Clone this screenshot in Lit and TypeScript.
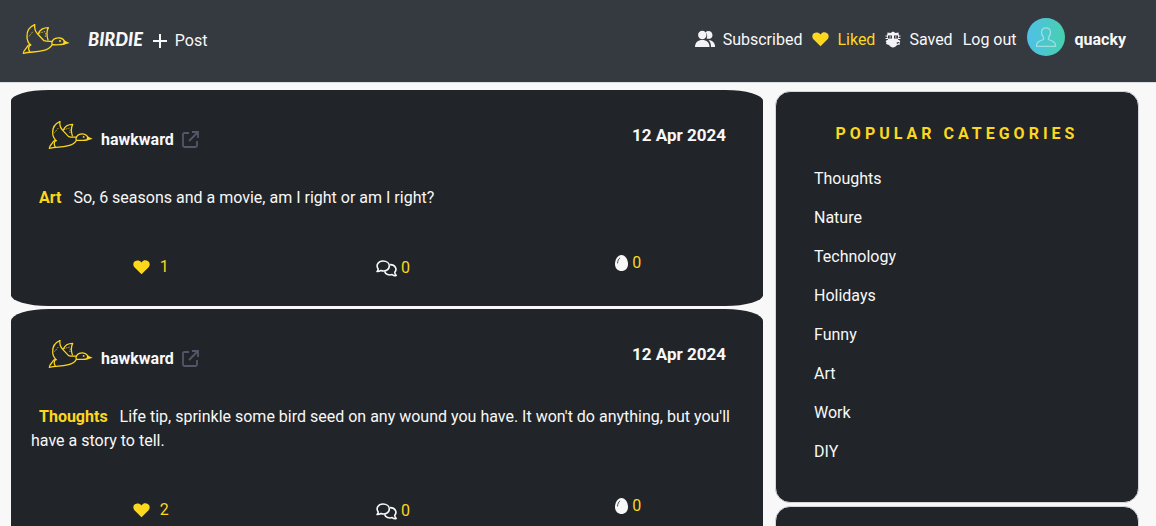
import { LitElement, html, css } from "lit";
import { customElement, property } from "lit/decorators.js";

const bird = html`<svg class="bird" viewBox="66 66 144 96" aria-hidden="true">
  <g fill="none" stroke="#fcd71d" stroke-width="4" stroke-linecap="round" stroke-linejoin="round">
    <path d="M104 71C90 77 80 90 81 107C81 117 85 126 92 132" />
    <path d="M104 71C103 81 107 93 113 99L132 119C140 122 149 121 157 121" />
    <path d="M115 98C119 88 129 80 145 80C140 90 139 101 144 117" />
    <path d="M157 121C160 113 171 109 181 111C189 112 193 119 196 124C193 130 186 131 178 131C170 132 160 131 157 131C155 128 155 124 157 121" />
    <path d="M157 131C151 141 139 147 128 149C109 154 91 152 70 157C69 150 77 145 82 137C83 133 86 131 92 132" />
    <path d="M90 132C84 139 86 147 89 152" />
    <path stroke-width="3" stroke-dasharray="1 6" d="M88 105L101 89M119 96L134 92M137 98L136 107" />
  </g>
  <path fill="#fcd71d" d="M191 118L209 126L189 132Z" />
  <circle fill="#fcd71d" cx="180" cy="120" r="3" />
</svg>`;

const heart = html`<svg class="heart" width="17" height="15" viewBox="0 0 18 16" aria-hidden="true">
  <path fill="#fcd71d" d="M9 15.200L1.700 8C-.4 5.900-.1 2.700 2 1.300C4.100-.1 7 .2 9 2.600C11-.2 13.900-.1 16 1.300C18.100 2.700 18.400 5.900 16.300 8Z" />
</svg>`;

const people = html`<svg width="20" height="18" viewBox="0 0 20 18" fill="#f4f4f8" aria-hidden="true">
  <path d="M10.500 2.300C13-.2 17.500 1.200 17.500 5.200C17.500 8.200 14 9.900 11.500 8.200C12.700 6.300 12.300 4 10.500 2.300Z" />
  <circle cx="7.300" cy="5" r="4.200" />
  <path d="M0 17C0 12.600 3 10 7.300 10S14.500 12.600 14.500 17Z" />
  <path d="M13.500 10.200C17.500 9.800 20.300 13 20 17H16C16 14 15.300 11.800 13.500 10.200Z" />
</svg>`;

const owl = html`<svg width="16" height="17" viewBox="0 0 16 17" aria-hidden="true">
  <g fill="#f4f4f8">
    <path d="M2.500 1.500L5.500 2L8 .5L10.500 2L13.500 1.500L14 5.500L13 9C15 9 16 10.500 14.500 11.500L15 13.500L12 14C11 15.500 9.500 16.500 8 16.500S5 15.500 4 14L1 13L1.500 11.500C0 10.500 1 9 3 9L2 5.500Z" />
    <path d="M.5 4.500H3V5.500H.5ZM13 4.500H15.500V5.500H13ZM.5 7H3V8H.5ZM13 7H15.500V8H13Z" />
  </g>
  <path fill="#353940" d="M3 4.500H7V7.500H3ZM9 4.500H13V7.500H9ZM11.500 11.500L14 11V12L12 13Z" />
  <path fill="#f4f4f8" d="M4.500 5.500H6V6.500H4.500ZM10 5.500H11.500V6.500H10Z" />
</svg>`;

const comments = html`<svg width="21" height="17" viewBox="0 0 21 17" fill="none" stroke="#f8f8f8" stroke-width="1.600" stroke-linejoin="round" aria-hidden="true">
  <path d="M1 11.500C2 10.600 2.200 9.600 2.200 9C-.3 5.500 2 1 7 1C11 1 13.300 3.300 13.300 6C13.300 9.800 9 11.900 4.900 10.500C3.700 11.200 2.400 11.700 1 11.500Z" />
  <path d="M14 4.600C19.400 4.500 21.400 9.300 18.700 12.300C18.700 13.500 19.300 14.500 20.200 15.500C18.700 15.900 17.200 15.400 16.200 14.600C13 15.700 9.500 14.500 8.600 11.600" />
</svg>`;

const egg = html`<svg width="13" height="16" viewBox="0 0 13 16" aria-hidden="true">
  <path fill="#f8f8f8" d="M6.500 0C10.300 0 13 4.500 13 9C13 13.500 10 16 6.500 16S0 13.500 0 9C0 4.500 2.700 0 6.500 0Z" />
  <path fill="none" stroke="#4a4e56" stroke-linecap="round" d="M4.800 3C3.500 4 2.700 5.700 2.500 8" />
</svg>`;

const external = html`<svg width="17" height="17" viewBox="0 0 17 17" fill="none" stroke="#555668" stroke-width="1.800" aria-hidden="true">
  <path d="M7 2H2.500Q1 2 1 3.500V14.500Q1 16 2.500 16H13.500Q15 16 15 14.500V10M10 1H16V7M16 1L7 10" />
</svg>`;

const plus = html`<svg width="14" height="14" viewBox="0 0 14 14" stroke="#f8f8f8" stroke-width="2" aria-hidden="true">
  <path d="M7 0V14M0 7H14" />
</svg>`;

const avatar = html`<svg width="38" height="38" viewBox="0 0 38 38" role="img" aria-label="Profile">
  <defs>
    <linearGradient id="sky"><stop offset="0" stop-color="#4fc0e8" /><stop offset="1" stop-color="#47d0ae" /></linearGradient>
  </defs>
  <circle cx="19" cy="19" r="19" fill="url(#sky)" />
  <path fill="none" stroke="#9be0e0" stroke-width="1.300" d="M9.500 28.300C9.200 24.500 11 23.500 16.500 21.500V19.500C13.500 16 13.500 9.800 19 9.800S24.500 16 21.500 19.500V21.500C27 23.500 28.800 24.500 28.500 28.300Z" />
</svg>`;

interface Post {
  author: string;
  date: string;
  category: string;
  text: string;
  likes: number;
  comments: number;
  eggs: number;
}

@customElement("birdie-navbar")
class BirdieNavbar extends LitElement {
  static styles = css`
    :host { display: block; }
    a { color: inherit; text-decoration: none; }
    svg { display: block; flex: none; }
    .bar {
      display: flex; align-items: center; justify-content: space-between;
      height: 82px; padding: 0 30px 8px 22px; box-sizing: border-box;
      background: #353940; color: #f8f8f8;
      box-shadow: 0 1px 0 #dcdee2;
      white-space: nowrap;
    }
    .brand, .links, .item { display: flex; align-items: center; }
    .brand { padding-top: 4px; }
    .bird { width: 48px; height: 32px; }
    .name {
      margin: 0 10px 0 18px; font: italic 900 18px/28px Lato, sans-serif;
      text-transform: uppercase;
    }
    .item { gap: 8px; }
    .brand .item { padding-top: 4px; }
    .links { gap: 10px; padding-top: 4px; }
    .links span, .logout { padding-top: 2px; }
    .active { color: #fcd71d; }
    .user { gap: 10px; font-weight: 700; }
    .user svg { margin-bottom: 4px; }
  `;

  render() {
    return html`<nav class="bar">
      <div class="brand">
        <a href="#home" aria-label="Home">${bird}</a>
        <a class="name" href="#home">Birdie</a>
        <a class="item" href="#post">${plus}<span>Post</span></a>
      </div>
      <div class="links">
        <a class="item" href="#subscribed">${people}<span>Subscribed</span></a>
        <a class="item active" href="#liked">${heart}<span>Liked</span></a>
        <a class="item" href="#saved">${owl}<span>Saved</span></a>
        <a class="logout" href="#logout">Log out</a>
        <a class="item user" href="#profile">${avatar}<span>quacky</span></a>
      </div>
    </nav>`;
  }
}

@customElement("birdie-post")
class BirdiePost extends LitElement {
  @property({ attribute: false }) post!: Post;

  static styles = css`
    :host { display: block; }
    a { color: inherit; text-decoration: none; }
    svg { display: block; flex: none; }
    p { margin: 0; }
    .card { background: #212529; color: #f8f8f8; border-radius: 5%; padding: 28px 20px 26px; }
    .head { display: flex; align-items: center; justify-content: space-between; padding: 0 17px; }
    .author { display: flex; align-items: center; gap: 8px; font-weight: 700; }
    .bird { width: 45px; height: 30px; }
    .author span { padding-top: 10px; }
    .author .open { padding-top: 8px; }
    .date { font-size: 17px; font-weight: 700; }
    .text { margin-top: 34px; line-height: 24px; }
    .category { color: #fcd71d; font-weight: 700; margin: 0 8px; }
    .stats { display: grid; grid-template-columns: repeat(3, 1fr); align-items: start; margin-top: 41px; }
    button {
      display: flex; align-items: center; justify-content: center; gap: 4px;
      margin: 0; padding: 0; border: 0; background: none; color: #fcd71d;
      font: inherit; line-height: 24px; cursor: pointer;
    }
    .like { gap: 10px; padding: 4px 0 0 2px; }
    .comment { padding: 5px 0 0 12px; }
    .save { padding-left: 8px; }
  `;

  render() {
    const p = this.post;
    return html`<article class="card">
      <header class="head">
        <div class="author">
          <a href="#profile" aria-label=${p.author}>${bird}</a>
          <span>${p.author}</span>
          <a class="open" href="#detail" aria-label="Open post">${external}</a>
        </div>
        <time class="date">${p.date}</time>
      </header>
      <p class="text"><span class="category">${p.category}</span> ${p.text}</p>
      <div class="stats">
        <button class="like" aria-label="Likes">${heart}<span>${p.likes}</span></button>
        <button class="comment" aria-label="Comments">${comments}<span>${p.comments}</span></button>
        <button class="save" aria-label="Saves">${egg}<span>${p.eggs}</span></button>
      </div>
    </article>`;
  }
}

@customElement("app-root")
class AppRoot extends LitElement {
  posts: Post[] = [
    { author: "hawkward", date: "12 Apr 2024", category: "Art", text: "So, 6 seasons and a movie, am I right or am I right?", likes: 1, comments: 0, eggs: 0 },
    { author: "hawkward", date: "12 Apr 2024", category: "Thoughts", text: "Life tip, sprinkle some bird seed on any wound you have. It won't do anything, but you'll have a story to tell.", likes: 2, comments: 0, eggs: 0 },
  ];

  categories = ["Thoughts", "Nature", "Technology", "Holidays", "Funny", "Art", "Work", "DIY"];

  static styles = css`
    :host {
      display: block; height: 100vh; overflow: hidden; background: #f8f8f8;
      font: 16px/24px Roboto, sans-serif;
    }
    .page {
      display: grid; grid-template-columns: minmax(0, 752fr) minmax(0, 364fr);
      column-gap: 12px; padding: 8px 17px 0 11px; align-items: start;
    }
    .feed { display: grid; gap: 3px; }
    .side { display: grid; gap: 3px; padding-top: 1px; }
    .panel {
      background: #212529; color: #f8f8f8; border: 1px solid #d3d5da;
      border-radius: 15px; padding: 30px 38px 38px; min-height: 60px;
    }
    h2 {
      margin: 0 0 21px; color: #fcd71d; font-size: 16px; line-height: 24px;
      font-weight: 700; text-align: center; text-transform: uppercase; letter-spacing: 4px;
    }
    ul { list-style: none; margin: 0; padding: 0; display: grid; gap: 15px; }
    a { color: inherit; text-decoration: none; }
  `;

  render() {
    return html`<birdie-navbar></birdie-navbar>
      <main class="page">
        <section class="feed">${this.posts.map((p) => html`<birdie-post .post=${p}></birdie-post>`)}</section>
        <aside class="side">
          <section class="panel">
            <h2>Popular Categories</h2>
            <ul>${this.categories.map((c) => html`<li><a href="#category">${c}</a></li>`)}</ul>
          </section>
          <section class="panel"></section>
        </aside>
      </main>`;
  }
}
